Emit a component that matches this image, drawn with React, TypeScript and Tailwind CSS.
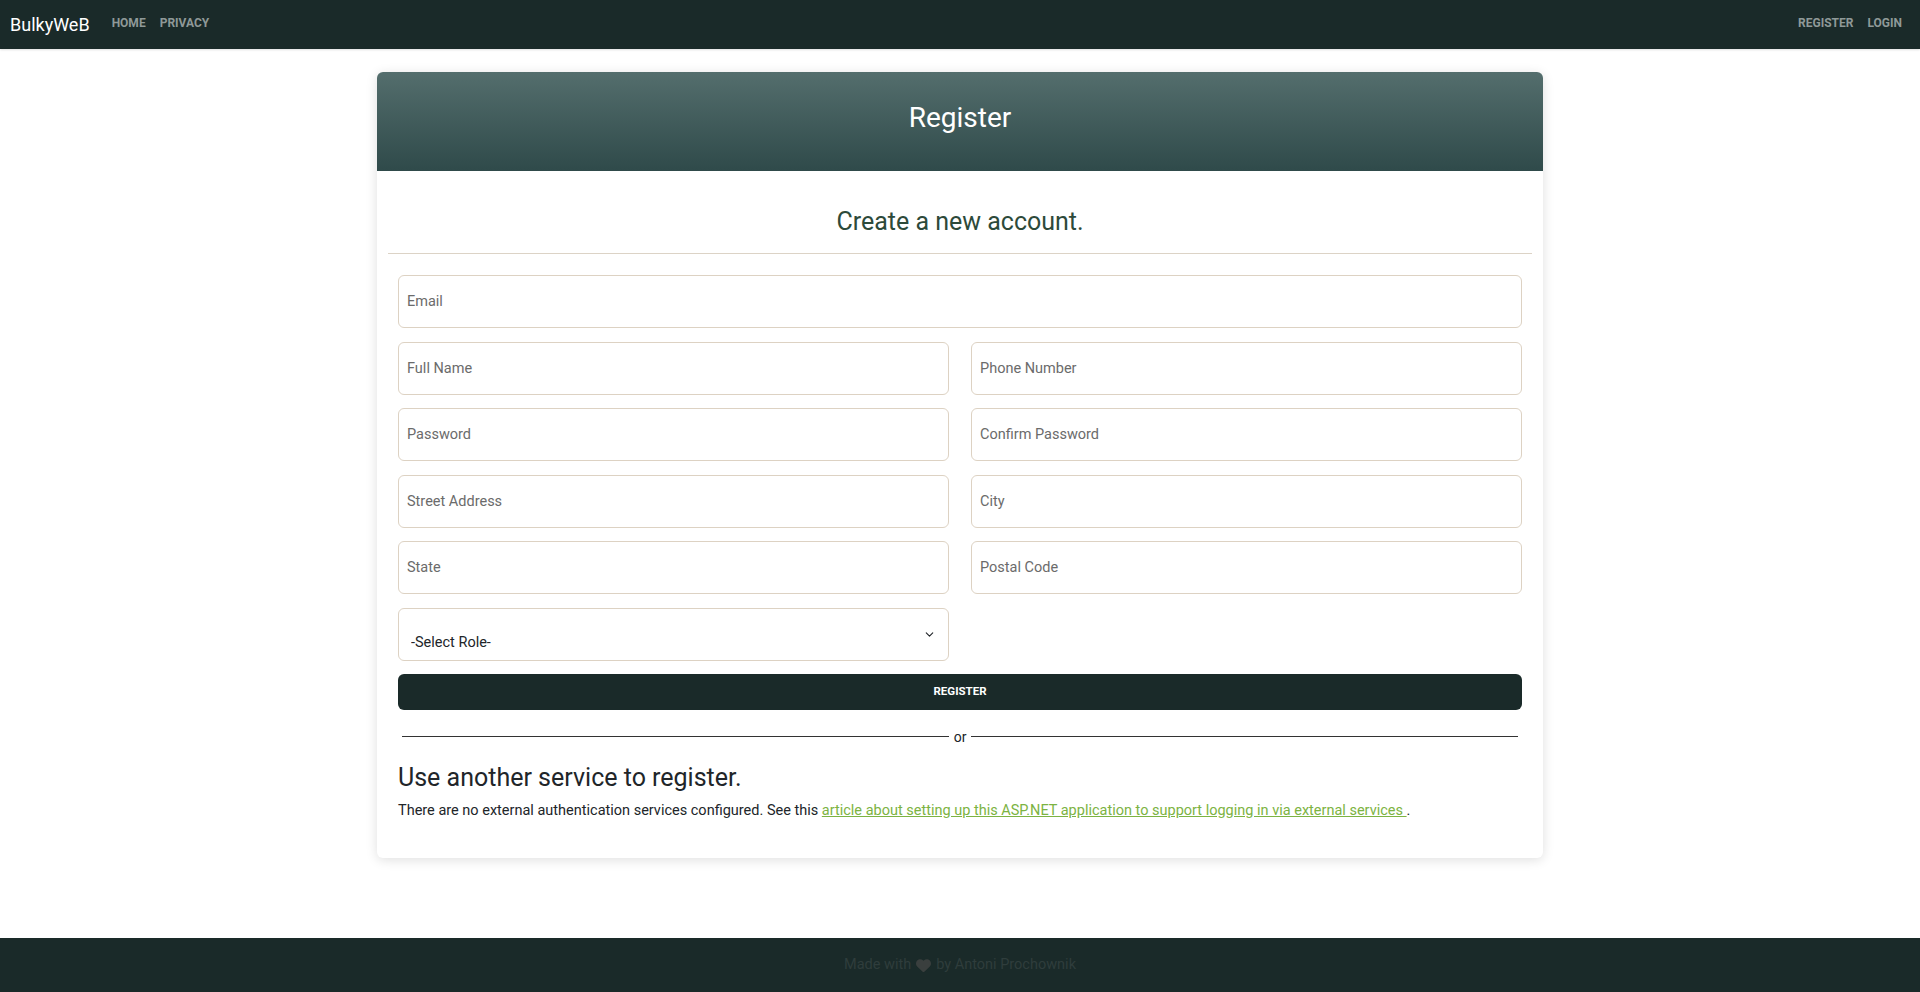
import { ChevronDown } from "lucide-react";

const rows: [string, string | null][] = [
  ["Full Name", "Phone Number"],
  ["Password", "Confirm Password"],
  ["Street Address", "City"],
  ["State", "Postal Code"],
];

function Field({ label }: { label: string }) {
  return (
    <input
      placeholder={label}
      className="w-full h-[53px] rounded-[6px] border border-[#ddd2c3] bg-white px-[8px] text-[14.5px] text-[#212529] placeholder:text-[#6b6b6b] outline-none"
    />
  );
}

export default function App() {
  return (
    <div className="min-h-screen flex flex-col bg-white font-['Roboto','Liberation_Sans',sans-serif]">
      {/* Navbar */}
      <nav className="h-[49px] shrink-0 bg-[#1a2a29] flex items-center justify-between px-[10px] shadow-[0_1px_2px_rgba(0,0,0,0.12)]">
        <div className="flex items-center">
          <span className="text-white text-[18px] mr-[22px]">BulkyWeB</span>
          <div className="flex items-center pb-[4px]">
            <a className="text-[12px] font-bold text-[#8f9998] mr-[14px]">HOME</a>
            <a className="text-[12px] font-bold text-[#8f9998]">PRIVACY</a>
          </div>
        </div>
        <div className="flex items-center pr-[8px] pb-[4px]">
          <a className="text-[12px] font-bold text-[#8f9998] mr-[14px]">REGISTER</a>
          <a className="text-[12px] font-bold text-[#8f9998]">LOGIN</a>
        </div>
      </nav>

      {/* Card */}
      <main className="pt-[23px]">
        <div className="mx-auto w-[1166px] rounded-[6px] bg-white shadow-[0_2px_12px_rgba(0,0,0,0.13)]">
          <div className="h-[99px] rounded-t-[6px] bg-gradient-to-b from-[#546e6d] to-[#2f4a4a] flex items-center justify-center pb-[7px]">
            <h2 className="text-white text-[28px]">Register</h2>
          </div>
          <div className="px-[11px] pb-[37px]">
            <h2 className="mt-[36px] mb-[16px] text-center text-[25px] leading-[30px] text-[#2d4a3a]">
              Create a new account.
            </h2>
            <hr className="border-0 h-px bg-[#dcd3c6]" />
            <form className="px-[10px] pt-[21px]">
              <Field label="Email" />
              {rows.map(([a, b]) => (
                <div key={a} className="grid grid-cols-2 gap-x-[22px] mt-[13.5px]">
                  <Field label={a} />
                  {b && <Field label={b} />}
                </div>
              ))}
              <div className="grid grid-cols-2 gap-x-[22px] mt-[14px]">
                <div className="relative">
                  <select className="w-full h-[53px] appearance-none rounded-[6px] border border-[#ddd2c3] bg-white pl-[12px] pt-[17px] text-[14.5px] text-[#212529] outline-none">
                    <option>-Select Role-</option>
                  </select>
                  <ChevronDown
                    size={13}
                    strokeWidth={2}
                    className="absolute right-[13px] top-[20px] text-[#212529]"
                  />
                </div>
              </div>
              <button
                type="button"
                className="mt-[13px] w-full h-[35.5px] rounded-[6px] bg-[#1a2a29] text-white text-[11.5px] font-bold"
              >
                REGISTER
              </button>
            </form>
            <div className="px-[14px] mt-[19px] flex items-center text-[14px] text-[#212529]">
              <div className="flex-1 h-px bg-[#333]" />
              <span className="px-[5px] leading-[16px]">or</span>
              <div className="flex-1 h-px bg-[#333]" />
            </div>
            <div className="px-[10px]">
              <h3 className="mt-[18px] text-[25px] leading-[30px] text-[#212529]">
                Use another service to register.
              </h3>
              <p className="mt-[7px] text-[14.5px] text-[#212529]">
                There are no external authentication services configured. See this{" "}
                <a className="text-[#7cb342] underline">
                  article about setting up this ASP.NET application to support logging in via external services{" "}
                </a>
                .
              </p>
            </div>
          </div>
        </div>
      </main>

      {/* Footer */}
      <footer className="mt-auto h-[54px] shrink-0 bg-[#1a2a29] flex items-center justify-center text-[14.5px] text-[#2f3d3c]">
        Made with
        <svg viewBox="0 0 512 512" className="mx-[5px] w-[15px] h-[15px] fill-[#3a3f3e]">
          <path d="M47.6 300.4L228.3 469.1c7.5 7 17.4 10.9 27.7 10.9s20.2-3.9 27.7-10.9L464.4 300.4c30.4-28.3 47.6-68 47.6-109.5v-5.8c0-69.9-50.5-129.5-119.4-141C347 36.5 300.6 51.4 268 84L256 96 244 84c-32.6-32.6-79-47.5-124.6-39.9C50.5 55.6 0 115.2 0 185.1v5.8c0 41.5 17.2 81.2 47.6 109.5z" />
        </svg>
        by Antoni Prochownik
      </footer>
    </div>
  );
}
